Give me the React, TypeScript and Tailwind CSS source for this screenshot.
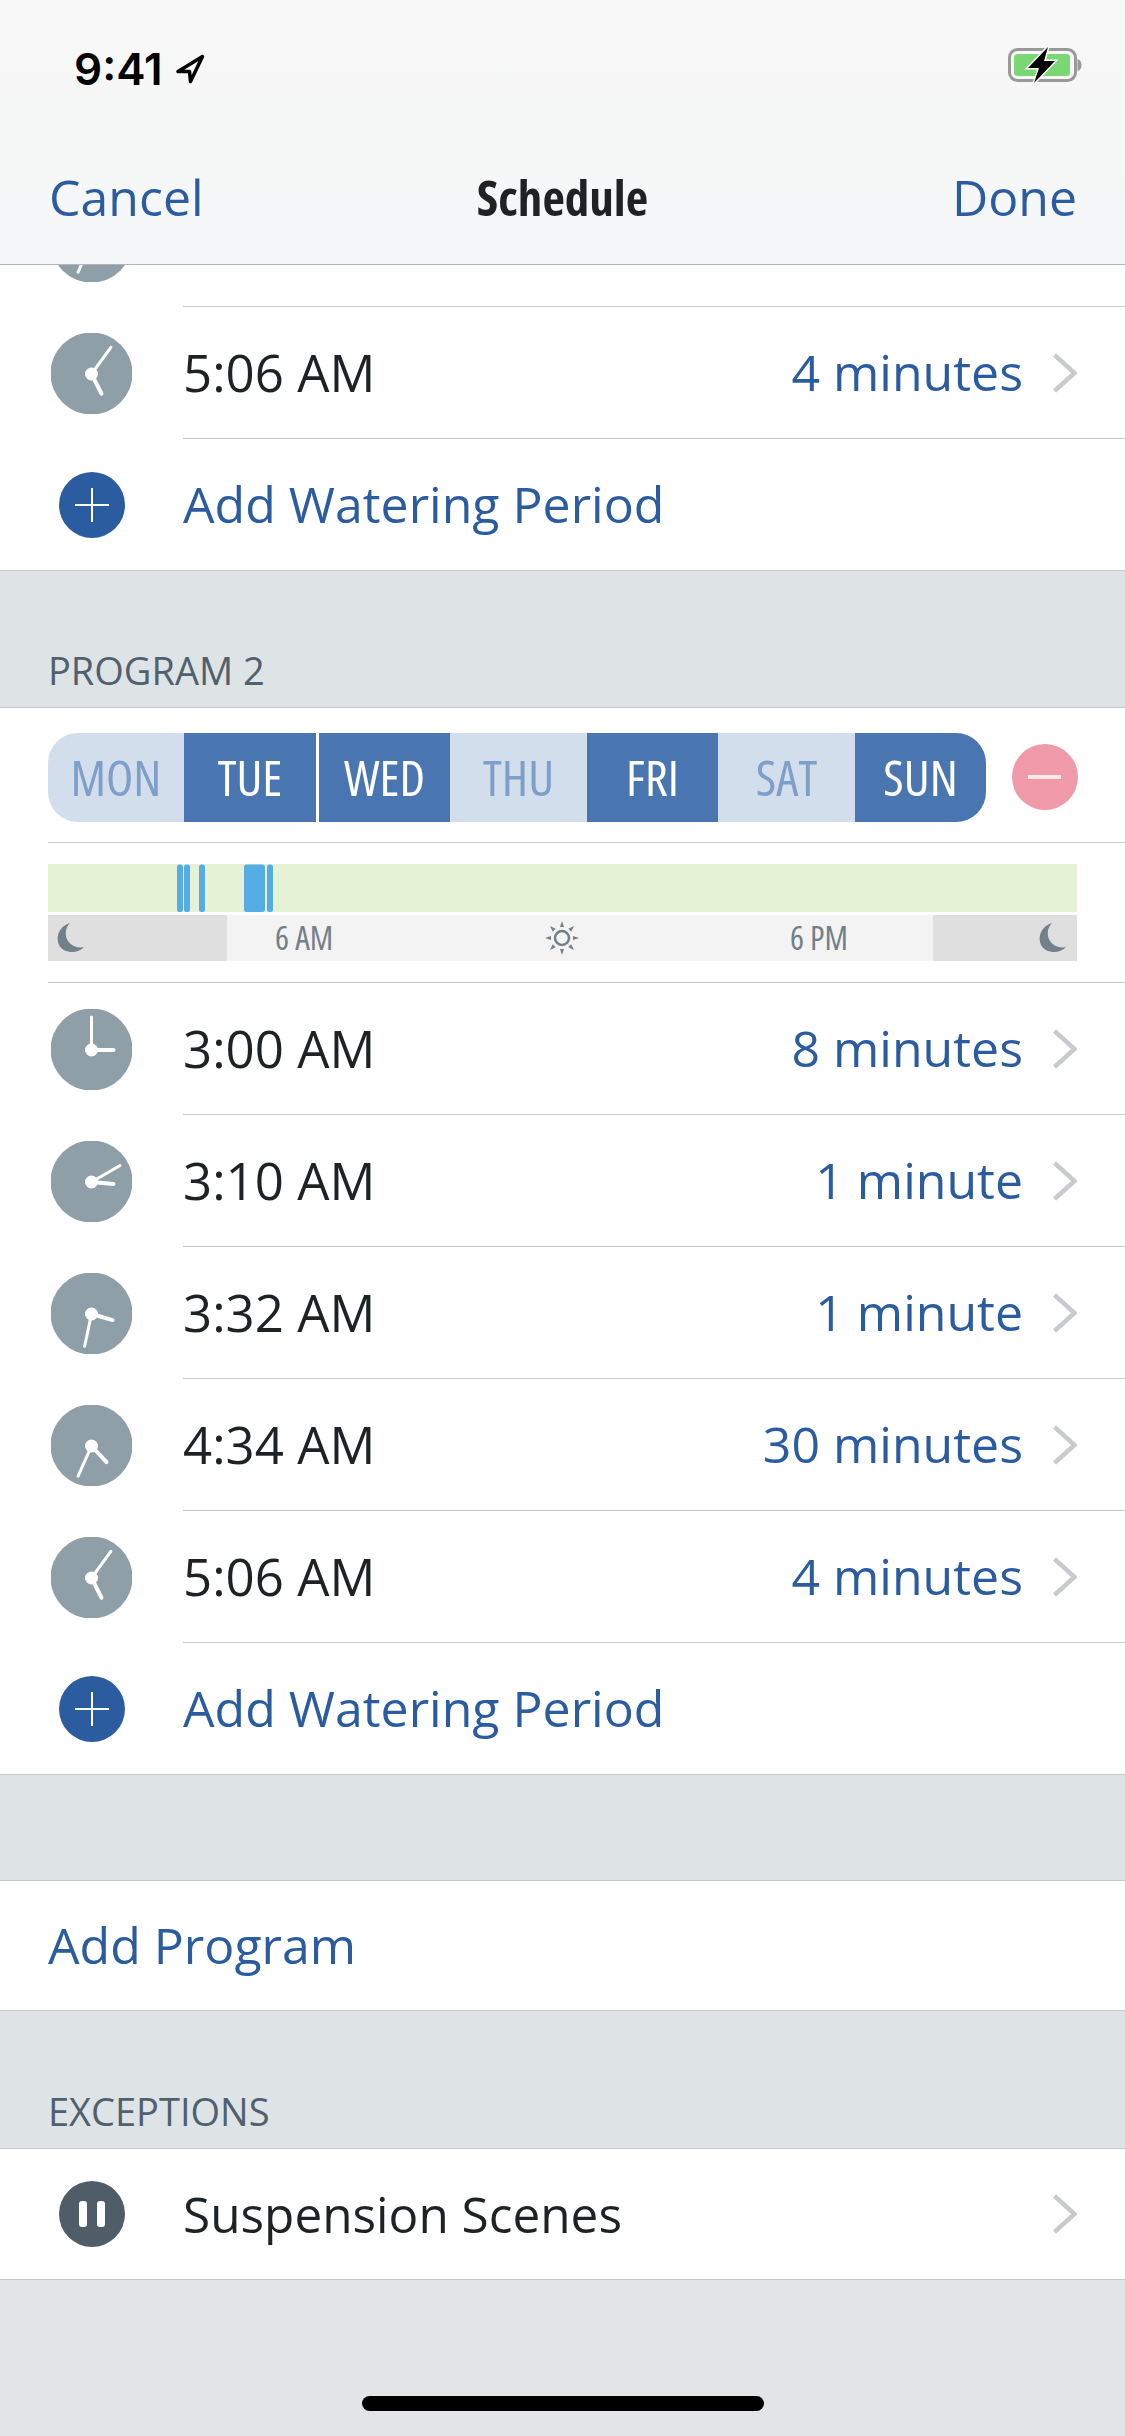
import React from 'react'

const font = { fontFamily: '"Open Sans", "Noto Sans", sans-serif' }

// clock hands are worked out from the time shown in the row
function Clock({ hour, minute }: { hour: number; minute: number }) {
  const minuteAngle = (minute * 6 * Math.PI) / 180
  const hourAngle = (((hour % 12) * 30 + minute / 2) * Math.PI) / 180
  return (
    <svg width="81" height="81" viewBox="0 0 81 81">
      <circle cx="40.5" cy="40.5" r="41" fill="#8f9fa8" />
      <g stroke="#fff" strokeLinecap="round" fill="none">
        <line x1="40.5" y1="41" x2={40.5 + 33 * Math.sin(minuteAngle)} y2={41 - 33 * Math.cos(minuteAngle)} strokeWidth="3" />
        <line x1="40.5" y1="41" x2={40.5 + 22 * Math.sin(hourAngle)} y2={41 - 22 * Math.cos(hourAngle)} strokeWidth="4" />
      </g>
      <circle cx="40.5" cy="41" r="6.5" fill="#fff" />
    </svg>
  )
}

function Chevron() {
  return (
    <svg width="24" height="40" viewBox="0 0 24 40" fill="none" className="shrink-0">
      <path d="M1.500 2 L21.500 20 L1.500 38" stroke="#c8cacd" strokeWidth="4.5" />
    </svg>
  )
}

function TimeRow({ time, hour, minute, duration }: { time: string; hour: number; minute: number; duration: string }) {
  return (
    <div className="flex h-[132px]">
      <div className="flex w-[183px] shrink-0 items-center justify-center">
        <Clock hour={hour} minute={minute} />
      </div>
      <div className="flex flex-1 items-center border-b-[1.5px] border-[#c6c7c9] pr-[48px]">
        <span className="flex-1 text-[51px] text-[#1e2224]">{time}</span>
        <span className="text-[50px] text-[#2b5ca0]">{duration}</span>
        <span className="ml-[30px] flex"><Chevron /></span>
      </div>
    </div>
  )
}

// row scrolled almost out of view, only the foot of its clock shows under the nav bar
function ScrolledOffRow() {
  return (
    <div className="flex h-[132px]">
      <div className="flex w-[183px] shrink-0 items-center justify-center">
        <Clock hour={4} minute={34} />
      </div>
      <div className="flex-1 border-b-[1.5px] border-[#c6c7c9]" />
    </div>
  )
}

function AddRow() {
  return (
    <div className="flex h-[132px] items-center border-b-[1.5px] border-[#c4c8cb]">
      <div className="flex w-[183px] shrink-0 items-center justify-center">
        <svg width="66" height="66" viewBox="0 0 66 66">
          <circle cx="33" cy="33" r="33" fill="#2b5ca0" />
          <path d="M16 33 H50 M33 16 V50" stroke="#fff" strokeWidth="2" />
        </svg>
      </div>
      <span className="text-[50px] text-[#2b5ca0]">Add Watering Period</span>
    </div>
  )
}

function SectionLabel({ children, className }: { children: React.ReactNode; className: string }) {
  return (
    <div className={`flex items-end border-b-[1.5px] border-[#c4c8cb] bg-[#dee3e6] pb-[12px] pl-[48px] text-[38px] leading-[50px] text-[#50606c] ${className}`}>
      {children}
    </div>
  )
}

const days = [
  { label: 'MON', on: false, w: 'w-[136px]' },
  { label: 'TUE', on: true, w: 'w-[132px]' },
  { label: 'WED', on: true, w: 'w-[131px] ml-[3px]' },
  { label: 'THU', on: false, w: 'w-[137px]' },
  { label: 'FRI', on: true, w: 'w-[131px]' },
  { label: 'SAT', on: false, w: 'w-[137px]' },
  { label: 'SUN', on: true, w: 'w-[131px]' },
]

function DayPicker() {
  return (
    <div className="ml-[48px] flex h-[135px] items-center border-b-[1.5px] border-[#c6c7c9] pt-[4px]">
      <div className="flex h-[89px] overflow-hidden rounded-[30px]">
        {days.map((d) => (
          <div
            key={d.label}
            className={`flex items-center justify-center text-[50px] [font-stretch:75%] ${d.w} ${d.on ? 'bg-[#4976b0] text-white' : 'bg-[#d3deec] text-[#7d9fc9]'}`}
          >
            {d.label}
          </div>
        ))}
      </div>
      <svg width="66" height="66" viewBox="0 0 66 66" className="ml-[26px]">
        <circle cx="33" cy="33" r="33" fill="#f09aa9" />
        <path d="M16 33 H49" stroke="#fbe6ea" strokeWidth="4" />
      </svg>
    </div>
  )
}

function Moon() {
  return (
    <svg width="28" height="30" viewBox="0 0 28 30">
      <path d="M13 0 C3 3 -2 13 2 22 C6 30 20 32 27 24 C18 26 10 20 9 13 C8 8 10 3 13 0 Z" fill="#72808a" />
    </svg>
  )
}

function Sun() {
  const rays = [0, 45, 90, 135, 180, 225, 270, 315]
  return (
    <svg width="34" height="34" viewBox="0 0 34 34">
      <circle cx="17" cy="17" r="7" fill="none" stroke="#72808a" strokeWidth="2.5" />
      {rays.map((r) => (
        <path key={r} d="M17 0 L19 6 H15 Z" fill="#72808a" transform={`rotate(${r} 17 17)`} />
      ))}
    </svg>
  )
}

function Timeline() {
  // watering periods, x in px from the left of the bar
  const periods = [
    [129, 6],
    [136, 6],
    [151, 6],
    [196, 21],
    [219, 6],
  ]
  return (
    <div className="ml-[48px] flex h-[140px] flex-col border-b-[1.5px] border-[#c6c7c9] pt-[21px]">
      <svg width="1029" height="48" viewBox="0 0 1029 48" className="block">
        <rect width="1029" height="48" fill="#e5f2d6" />
        {periods.map(([x, w]) => (
          <rect key={x} x={x} y="0.5" width={w} height="47.5" rx="2.5" fill="#55ade3" />
        ))}
      </svg>
      <div className="mt-[3px] flex h-[46px] w-[1029px] text-[33px] text-[#72808a] [font-stretch:75%]">
        <div className="flex w-[179px] items-center bg-[#dfdfdf] pl-[9px]"><Moon /></div>
        <div className="flex flex-1 items-center justify-between bg-[#f3f3f3] pl-[48px] pr-[85px]">
          <span>6 AM</span>
          <Sun />
          <span>6 PM</span>
        </div>
        <div className="flex w-[144px] items-center justify-end bg-[#dfdfdf] pr-[10px]"><Moon /></div>
      </div>
    </div>
  )
}

function BatteryIcon() {
  return (
    <svg width="76" height="36" viewBox="0 0 76 36" className="-mr-[7px]">
      <rect x="1.5" y="2.5" width="66" height="31" rx="8" fill="none" stroke="#999" strokeWidth="3" />
      <rect x="6" y="7" width="56" height="22" rx="3.5" fill="#7ad774" />
      <path d="M69.5 12 C72 12.5 73.5 15 73.5 18 C73.5 21 72 23.500 69.5 24 Z" fill="#999" />
      <path d="M40 0 L20 21 H31 L26 36 L47 14 H36 Z" fill="#000" stroke="#fff" strokeWidth="3" paintOrder="stroke" />
    </svg>
  )
}

export default function App() {
  return (
    <div className="flex h-[2436px] w-[1125px] flex-col overflow-hidden bg-[#e1e5e8]" style={font}>
      {/* Nav bar */}
      <div className="relative z-10 h-[265px] shrink-0 border-b-[1.5px] border-[#b4b4b4] bg-gradient-to-b from-[#f8f8f8] to-[#f5f6f7] px-[48px]">
        <div className="flex h-[160px] items-start justify-between pt-[47px]">
          <div className="flex items-center pl-[26px]">
            <span className="text-[44px] font-semibold leading-[44px] text-black [font-family:Inter,sans-serif]">9:41</span>
            <svg width="30" height="30" viewBox="0 0 30 30" className="ml-[12px]" fill="none">
              <path d="M27.500 2.500 L3 17.500 L14.500 17.500 L15.500 27.500 Z" stroke="#000" strokeWidth="3.500" strokeLinejoin="round" />
            </svg>
          </div>
          <BatteryIcon />
        </div>
        <div className="grid grid-cols-3 items-center text-[50px] text-[#2b5ca0]">
          <span className="pl-[1px]">Cancel</span>
          <span className="text-center text-[49px] font-bold text-[#1e2224] [font-stretch:75%]">Schedule</span>
          <span className="text-right">Done</span>
        </div>
      </div>

      {/* Scrolled list */}
      <div className="-mt-[90px] flex-1">
        <div className="bg-white">
          <ScrolledOffRow />
          <TimeRow time="5:06 AM" hour={5} minute={6} duration="4 minutes" />
          <AddRow />
        </div>

        <SectionLabel className="h-[137px]">PROGRAM 2</SectionLabel>
        <div className="bg-white">
          <DayPicker />
          <Timeline />
          <TimeRow time="3:00 AM" hour={3} minute={0} duration="8 minutes" />
          <TimeRow time="3:10 AM" hour={3} minute={10} duration="1 minute" />
          <TimeRow time="3:32 AM" hour={3} minute={32} duration="1 minute" />
          <TimeRow time="4:34 AM" hour={4} minute={34} duration="30 minutes" />
          <TimeRow time="5:06 AM" hour={5} minute={6} duration="4 minutes" />
          <AddRow />
        </div>

        <div className="h-[106px] border-b-[1.5px] border-[#c4c8cb] bg-[#dee3e6]" />
        <div className="flex h-[130px] items-center border-b-[1.5px] border-[#c4c8cb] bg-white pl-[48px] text-[50px] text-[#2b5ca0]">
          Add Program
        </div>
        <SectionLabel className="h-[138px]">EXCEPTIONS</SectionLabel>
        <div className="flex h-[131px] items-center border-b-[1.5px] border-[#c4c8cb] bg-white pr-[48px]">
          <div className="flex w-[183px] shrink-0 items-center justify-center">
            <svg width="66" height="66" viewBox="0 0 66 66">
              <circle cx="33" cy="33" r="33" fill="#4f5d69" />
              <rect x="20" y="20" width="8" height="26" rx="3" fill="#fff" />
              <rect x="38" y="20" width="8" height="26" rx="3" fill="#fff" />
            </svg>
          </div>
          <span className="flex-1 text-[49.5px] text-[#1e2224]">Suspension Scenes</span>
          <Chevron />
        </div>
      </div>

      {/* Home indicator */}
      <div className="flex h-[40px] shrink-0 justify-center">
        <div className="h-[15px] w-[402px] rounded-full bg-black" />
      </div>
    </div>
  )
}
